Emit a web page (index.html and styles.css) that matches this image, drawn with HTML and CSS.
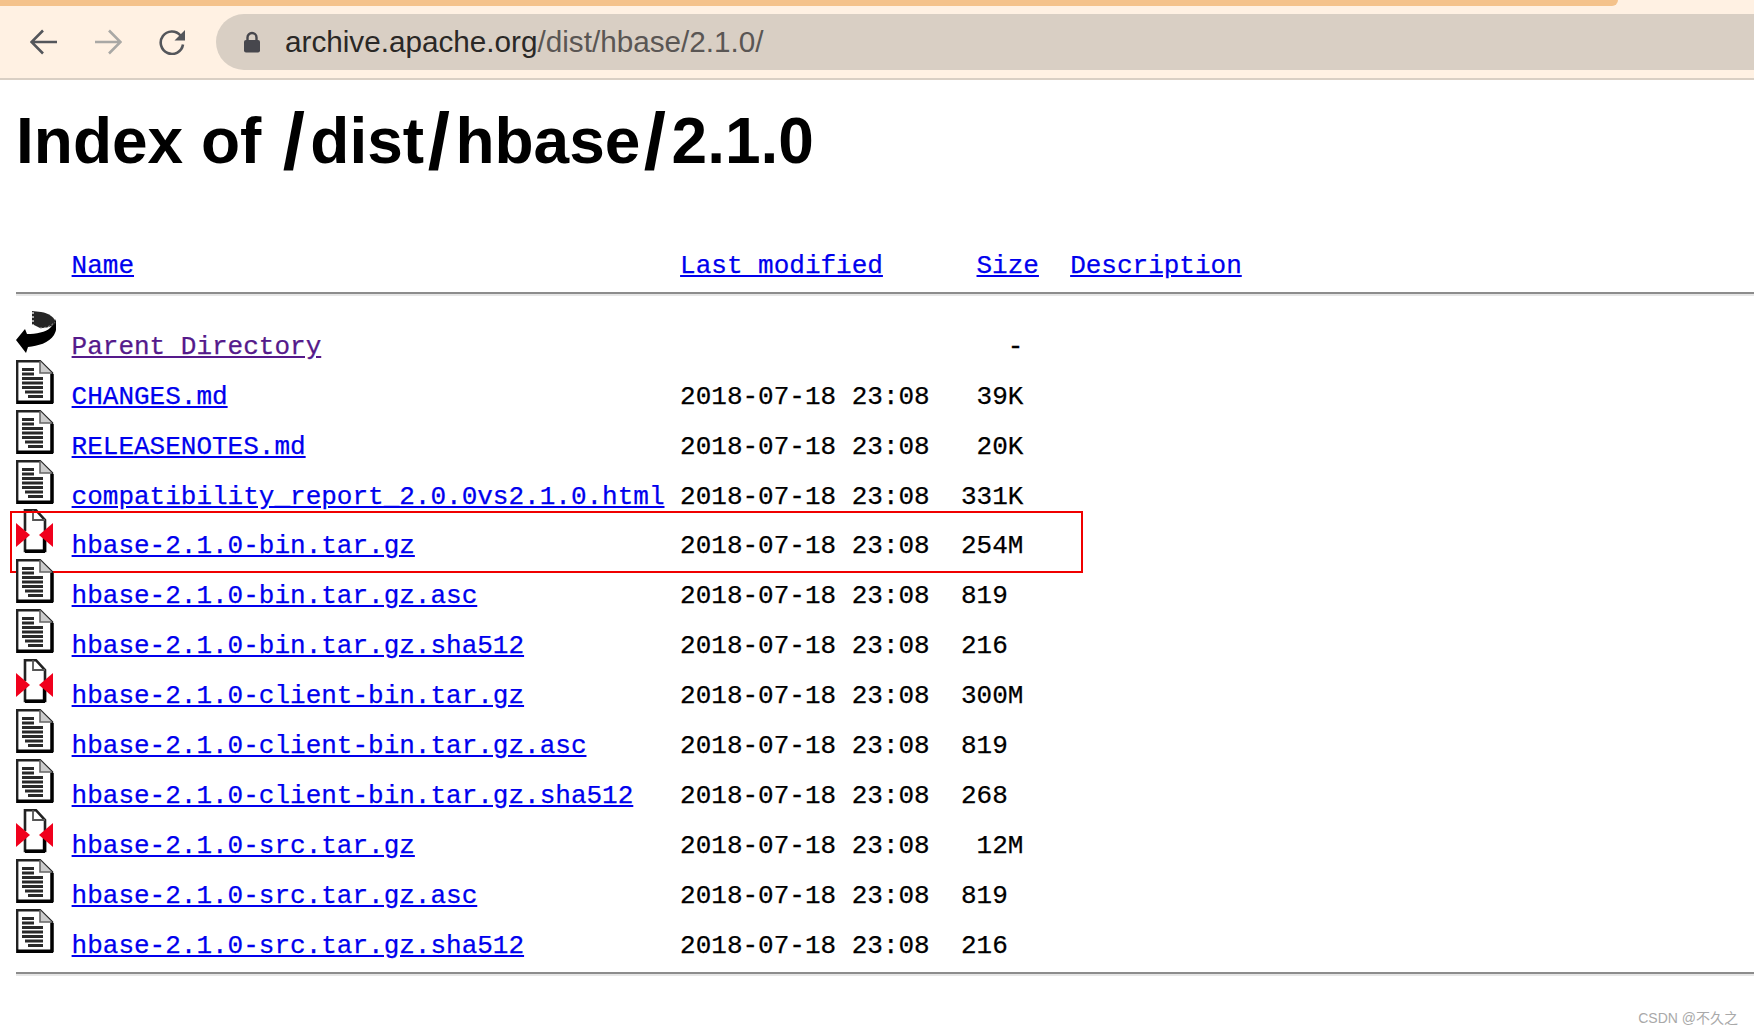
FILE: index.html
```html
<!DOCTYPE html>
<html lang="en">
<head>
<meta charset="utf-8">
<title>Index of /dist/hbase/2.1.0</title>
<link rel="stylesheet" href="styles.css">
</head>
<body>
<svg class="defs" aria-hidden="true">
  <filter id="soft"><feGaussianBlur stdDeviation="0.35"/></filter>
  <symbol id="i-text" viewBox="0 0 40 44">
    <g filter="url(#soft)">
      <path d="M1.2 1.2H24L36 13V43H1.2Z" fill="#fff" stroke="#222" stroke-width="2.4"/>
      <path d="M24 1V13H36" fill="#ccc" stroke="#666" stroke-width="1.6"/>
      <path d="M1 42.3H37M36 14V43" stroke="#000" stroke-width="3.4" fill="none"/>
      <path d="M6 9.5H18M6 14H18M6 18.5H27M6 23H27M6 27.5H27M9 32H27M12 36.5H27" stroke="#2a2a2a" stroke-width="3" fill="none"/>
    </g>
  </symbol>
  <symbol id="i-archive" viewBox="0 0 40 44">
    <g filter="url(#soft)">
      <path d="M9 1H20L29 10V43H9Z" fill="#fff"/>
      <path d="M9 22V1.2H20L29 11V22M9 28V42H29V28" fill="none" stroke="#222" stroke-width="2.6"/>
      <path d="M28.5 28V43M9 42.3H29" fill="none" stroke="#000" stroke-width="3.4"/>
      <path d="M17 1V11H29" fill="none" stroke="#555" stroke-width="1.8"/>
      <path d="M0 14L14 26L0 38Z" fill="#f0001a"/>
      <path d="M37 14L23 26L37 38Z" fill="#f0001a"/>
    </g>
  </symbol>
  <symbol id="i-back" viewBox="0 0 40 44">
    <g filter="url(#soft)">
      <path d="M0 30L9 19L11 24C20 24 30 22 34 18C37 15 39 12 40 9C41 15 41 20 38 25C33 33 22 36 12 37L10 43Z" fill="#000"/>
      <path d="M16 1L25 2C33 3 39 8 40 13C36 17 30 18 24 18L16 14Z" fill="#262626"/>
      <path d="M17 2V15" stroke="#aaa" stroke-width="2" stroke-dasharray="2 2" fill="none"/>
      <path d="M24 18C30 18 35 16 39 12" stroke="#999" stroke-width="1" stroke-dasharray="2 2" fill="none"/>
    </g>
  </symbol>
</svg>

<header class="chrome">
  <div class="tabstrip"><div class="tab"></div></div>
  <div class="toolbar">
    <svg class="nav nav-back" viewBox="0 0 28 26"><path d="M27 13H2M13 1.5L1.5 13L13 24.5"/></svg>
    <svg class="nav nav-forward" viewBox="0 0 28 26"><path d="M1 13H26M15 1.5L26.5 13L15 24.5"/></svg>
    <svg class="nav nav-reload" viewBox="0 0 28 26"><path d="M22.5 6.5A11.2 11.2 0 1 0 25 15.5"/><path class="solid" d="M27 1V11.5H16.5Z"/></svg>
    <div class="omnibox">
      <svg class="lock" viewBox="0 0 18 22"><path d="M4.5 10V6.5a4.5 4.5 0 0 1 9 0V10" class="shackle"/><rect x="1" y="9" width="16" height="12.5" rx="2"/></svg>
      <span class="url"><span class="host">archive.apache.org</span>/dist/hbase/2.1.0/</span>
    </div>
  </div>
</header>

<main class="page">
  <h1 class="title">Index of <span class="slash">/</span>dist<span class="slash">/</span>hbase<span class="slash">/</span>2.1.0</h1>

  <div class="row"><svg class="icon"></svg><span></span><a href="#">Name</a><a href="#">Last modified</a><span class="size-head"><a href="#">Size</a></span><a href="#">Description</a></div>
  <hr class="rule rule-top">

  <div class="row"><svg class="icon"><use href="#i-back"/></svg><span></span><a class="visited" href="#">Parent Directory</a><span></span><span>   -</span></div>
  <div class="row"><svg class="icon"><use href="#i-text"/></svg><span></span><a href="#">CHANGES.md</a><span>2018-07-18 23:08</span><span> 39K</span></div>
  <div class="row"><svg class="icon"><use href="#i-text"/></svg><span></span><a href="#">RELEASENOTES.md</a><span>2018-07-18 23:08</span><span> 20K</span></div>
  <div class="row"><svg class="icon"><use href="#i-text"/></svg><span></span><a href="#">compatibility_report_2.0.0vs2.1.0.html</a><span>2018-07-18 23:08</span><span>331K</span></div>
  <div class="row row-marked"><svg class="icon"><use href="#i-archive"/></svg><span></span><a href="#">hbase-2.1.0-bin.tar.gz</a><span>2018-07-18 23:08</span><span>254M</span></div>
  <div class="row"><svg class="icon"><use href="#i-text"/></svg><span></span><a href="#">hbase-2.1.0-bin.tar.gz.asc</a><span>2018-07-18 23:08</span><span>819</span></div>
  <div class="row"><svg class="icon"><use href="#i-text"/></svg><span></span><a href="#">hbase-2.1.0-bin.tar.gz.sha512</a><span>2018-07-18 23:08</span><span>216</span></div>
  <div class="row"><svg class="icon"><use href="#i-archive"/></svg><span></span><a href="#">hbase-2.1.0-client-bin.tar.gz</a><span>2018-07-18 23:08</span><span>300M</span></div>
  <div class="row"><svg class="icon"><use href="#i-text"/></svg><span></span><a href="#">hbase-2.1.0-client-bin.tar.gz.asc</a><span>2018-07-18 23:08</span><span>819</span></div>
  <div class="row"><svg class="icon"><use href="#i-text"/></svg><span></span><a href="#">hbase-2.1.0-client-bin.tar.gz.sha512</a><span>2018-07-18 23:08</span><span>268</span></div>
  <div class="row"><svg class="icon"><use href="#i-archive"/></svg><span></span><a href="#">hbase-2.1.0-src.tar.gz</a><span>2018-07-18 23:08</span><span> 12M</span></div>
  <div class="row"><svg class="icon"><use href="#i-text"/></svg><span></span><a href="#">hbase-2.1.0-src.tar.gz.asc</a><span>2018-07-18 23:08</span><span>819</span></div>
  <div class="row"><svg class="icon"><use href="#i-text"/></svg><span></span><a href="#">hbase-2.1.0-src.tar.gz.sha512</a><span>2018-07-18 23:08</span><span>216</span></div>

  <hr class="rule rule-bottom">
</main>

<div class="watermark">CSDN @不久之</div>
</body>
</html>
```

FILE: styles.css
```css
html, body {
  margin: 0;
  height: 1034px;
  overflow: hidden;
  background: #fff;
}

.defs {
  position: absolute;
  width: 0;
  height: 0;
}

/* Browser chrome */
.chrome {
  background: #fff1e3;
  border-bottom: 2px solid #d9cfc4;
}

.tabstrip {
  height: 6px;
}

.tab {
  width: 1618px;
  height: 6px;
  background: #f4c28b;
  border-bottom-right-radius: 8px;
}

.toolbar {
  display: flex;
  align-items: center;
  padding: 8px 0 8px 30px;
}

.nav {
  flex: none;
  width: 28px;
  height: 26px;
  fill: none;
  stroke: #54565b;
  stroke-width: 2.6;
}

.nav-back {
  margin-right: 36px;
}

.nav-forward {
  stroke: #a9a8a5;
  margin-right: 36px;
}

.nav-reload {
  margin-right: 30px;
}

.nav .solid {
  fill: #54565b;
  stroke: none;
}

.omnibox {
  flex: 1;
  display: flex;
  align-items: center;
  height: 56px;
  padding-left: 27px;
  background: #d9cfc4;
  border-radius: 28px 0 0 28px;
}

.lock {
  flex: none;
  width: 18px;
  height: 22px;
  margin-right: 24px;
  fill: #47474d;
}

.lock .shackle {
  fill: none;
  stroke: #47474d;
  stroke-width: 2.4;
}

.url {
  font: 29.7px "Liberation Sans", Arial, sans-serif;
  color: #5a5654;
}

.host {
  color: #2a2826;
}

/* Page */
.page {
  padding-left: 16px;
}

.title {
  margin: 24px 0 51px;
  font: bold 64px/74px "Liberation Sans", Arial, sans-serif;
  color: #000;
}

.slash {
  padding: 0 5.5px 0 3.5px;
  font-size: 80px;
  line-height: 0;
  vertical-align: -6px;
}

.row {
  position: relative;
  display: grid;
  grid-template-columns: 40px 1ch 39ch 18ch 7ch 1fr;
  align-items: baseline;
  justify-items: start;
  height: 49.9px;
  font: 26px "Liberation Mono", "Courier New", monospace;
  white-space: pre;
  color: #000;
  -webkit-text-stroke: 0.25px currentColor;
}

.row a {
  color: #0000ee;
}

.row a.visited {
  color: #551a8b;
}

.size-head {
  padding-left: 1ch;
}

.icon {
  display: block;
  width: 40px;
  height: 44px;
}

.row-marked::after {
  content: "";
  position: absolute;
  left: -6px;
  top: 2px;
  width: 1069px;
  height: 58px;
  border: 2px solid #f00000;
}

.rule {
  height: 2px;
  border: 0;
  border-bottom: 2px solid #e6e6e6;
  background: #8c8c8c;
}

.rule-top {
  margin: 13px 0 14px;
}

.rule-bottom {
  margin: 14px 0 0;
}

.watermark {
  position: absolute;
  right: 16px;
  bottom: 7px;
  font: 14px "Liberation Sans", "Noto Sans CJK SC", sans-serif;
  color: #a9a9a9;
}
```
